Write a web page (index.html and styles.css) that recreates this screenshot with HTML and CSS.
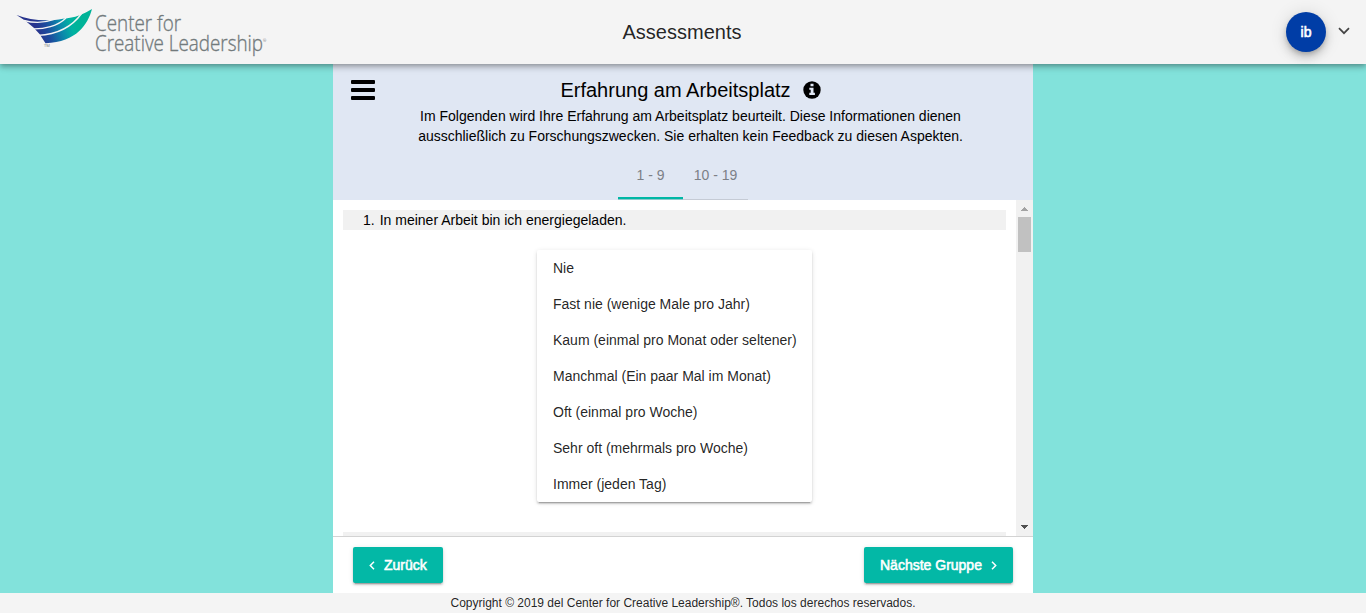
FILE: index.html
```html
<!DOCTYPE html>
<html lang="de">
<head>
<meta charset="utf-8">
<title>Assessments</title>
<link rel="stylesheet" href="styles.css">
</head>
<body>
<header class="topbar">
  <svg class="logo" width="256" height="50" viewBox="14 7 256 50" role="img" aria-label="Center for Creative Leadership">
    <defs>
      <linearGradient id="wing" gradientUnits="userSpaceOnUse" x1="36" y1="27" x2="74" y2="15">
        <stop offset="0" stop-color="#28348d"/>
        <stop offset=".25" stop-color="#1c4a9d"/>
        <stop offset=".6" stop-color="#0a8aab"/>
        <stop offset=".85" stop-color="#00b2a2"/>
        <stop offset="1" stop-color="#00b398"/>
      </linearGradient>
    </defs>
    <path fill="url(#wing)" d="M16.500 15C30 20.500 48 21.500 63 18.700C75 18 84 14 92 9C88 24 77 42 45.500 43.200L39.500 34L33.500 27.500L25 20.500Z"/>
    <path class="feather" d="M24 20.500C35 23.500 46 22.500 55 19.200"/>
    <path class="feather" d="M31 28.800C44 29.500 58 26 66 18"/>
    <path class="feather" d="M38 35.300C58 34.500 72 27 82 13"/>
    <text class="logo-tm" x="44" y="47">TM</text>
    <text class="logo-text" x="95" y="31.300" textLength="86" lengthAdjust="spacingAndGlyphs">Center for</text>
    <text class="logo-text" x="95" y="50.800" textLength="168" lengthAdjust="spacingAndGlyphs">Creative Leadership</text>
    <text class="logo-tm" x="263" y="42">®</text>
  </svg>
  <h1 class="app-title">Assessments</h1>
  <div class="account">
    <span class="avatar">ib</span>
    <svg width="12" height="8" viewBox="0 0 12 8"><path class="account-arrow" d="M1 1.200L6 6.200L11 1.200"/></svg>
  </div>
</header>
<main class="stage">
  <section class="panel">
    <div class="intro">
      <div class="menu"><i></i><i></i><i></i></div>
      <div class="heading">
        <h2>Erfahrung am Arbeitsplatz</h2>
        <svg width="18" height="18" viewBox="0 0 18 18"><circle cx="9" cy="9" r="8.700"/><path class="info-mark" d="M7.500 2.800h3v2.400h-3zM6.300 6.700h4.200v5h1.400v2.200H6.300v-2.200h1.400V8.800H6.300z"/></svg>
      </div>
      <p class="description">Im Folgenden wird Ihre Erfahrung am Arbeitsplatz beurteilt. Diese Informationen dienen<br>ausschließlich zu Forschungszwecken. Sie erhalten kein Feedback zu diesen Aspekten.</p>
      <nav class="tabs"><a class="tab active">1 - 9</a><a class="tab">10 - 19</a></nav>
    </div>
    <div class="scroller">
      <div class="questions">
        <div class="question"><span>1.</span><span>In meiner Arbeit bin ich energiegeladen.</span></div>
        <ul class="options">
          <li>Nie</li>
          <li>Fast nie (wenige Male pro Jahr)</li>
          <li>Kaum (einmal pro Monat oder seltener)</li>
          <li>Manchmal (Ein paar Mal im Monat)</li>
          <li>Oft (einmal pro Woche)</li>
          <li>Sehr oft (mehrmals pro Woche)</li>
          <li>Immer (jeden Tag)</li>
        </ul>
        <div class="question next"></div>
      </div>
      <div class="scrollbar">
        <svg width="17" height="17" viewBox="0 0 17 17" shape-rendering="crispEdges"><path fill="#a3a3a3" d="M8 7h1v1h1v1h1v1h1v1H5v-1h1V9h1V8h1z"/></svg>
        <div class="thumb"></div>
        <svg width="17" height="17" viewBox="0 0 17 17" shape-rendering="crispEdges"><path fill="#505050" d="M5 6h7v1h-1v1h-1v1H9v1H8V9H7V8H6V7H5z"/></svg>
      </div>
    </div>
    <div class="actions">
      <button class="button back"><svg width="6" height="9" viewBox="0 0 6 9"><path class="chevron" d="M5 .8L1.300 4.500L5 8.200"/></svg><span>Zurück</span></button>
      <button class="button forward"><span>Nächste Gruppe</span><svg width="6" height="9" viewBox="0 0 6 9"><path class="chevron" d="M1 .8L4.700 4.500L1 8.200"/></svg></button>
    </div>
  </section>
</main>
<footer class="footer">Copyright © 2019 del Center for Creative Leadership®. Todos los derechos reservados.</footer>
</body>
</html>
```

FILE: styles.css
```css
* { box-sizing: border-box; }
body {
  margin: 0;
  height: 613px;
  display: flex;
  flex-direction: column;
  overflow: hidden;
  font: 14px/20px "Liberation Sans", Arial, sans-serif;
  color: #000;
}
h1, h2, p, ul { margin: 0; padding: 0; font-weight: 400; }
svg { display: block; flex: none; }

.topbar {
  position: relative;
  z-index: 1;
  height: 64px;
  flex: none;
  display: grid;
  grid-template-columns: 1fr auto 1fr;
  align-items: center;
  padding: 0 16px 0 14px;
  background: #f4f4f4;
  box-shadow: 0 2px 4px -1px rgba(0,0,0,.2), 0 4px 5px rgba(0,0,0,.14), 0 1px 10px rgba(0,0,0,.12);
}
.logo { overflow: visible; margin-bottom: 1px; }
.logo-text { font: 300 22px "Open Sans", sans-serif; fill: #727a7c; stroke: #727a7c; stroke-width: .35px; }
.logo-tm { font: 4px "Open Sans", sans-serif; fill: #777; }
.feather { fill: none; stroke: #f4f4f4; stroke-width: 1.3; }
.app-title { font-size: 20px; line-height: 24px; color: rgba(0,0,0,.87); }
.account { justify-self: end; display: flex; align-items: center; gap: 12px; }
.account svg { margin-bottom: 3px; }
.account-arrow { fill: none; stroke: #444; stroke-width: 1.7; }
.avatar {
  width: 40px;
  height: 40px;
  border-radius: 50%;
  background: #003da6;
  color: #fff;
  -webkit-text-stroke: .6px #fff;
  line-height: 40px;
  text-align: center;
  box-shadow: 0 3px 5px -1px rgba(0,0,0,.2), 0 6px 10px rgba(0,0,0,.14), 0 1px 18px rgba(0,0,0,.12);
}

.stage { flex: 1; min-height: 0; display: flex; justify-content: center; background: #82e2db; }
.panel { width: 700px; display: flex; flex-direction: column; background: #fff; }
.intro {
  height: 136px;
  flex: none;
  display: grid;
  grid-template-columns: 72px 1fr 57px;
  grid-template-rows: 42px 40px 54px;
  background: #e0e7f3;
}
.menu { padding: 16px 0 0 18px; display: flex; flex-direction: column; gap: 4px; }
.menu i { width: 24px; height: 4px; border-radius: 1px; background: #000; }
.heading { display: flex; justify-content: center; align-items: center; gap: 12px; padding-top: 10px; }
.heading h2 { font-size: 20px; line-height: 30px; }
.info-mark { fill: #e0e7f3; }
.description { grid-column: 2; text-align: center; white-space: nowrap; }
.tabs { grid-column: 1 / -1; display: flex; justify-content: center; padding-top: 5px; }
.tab { width: 65px; line-height: 48px; height: 49px; text-align: center; color: #7c8087; border-bottom: 1px solid #c5cbd5; }
.tab.active { box-shadow: inset 0 -2px #00b7a5; border-bottom-color: #8fc9cc; }

.scroller { height: 336px; flex: none; display: flex; overflow: hidden; }
.questions { flex: 1; padding: 10px 10px 0; display: flex; flex-direction: column; }
.question { height: 20px; flex: none; display: flex; gap: 5px; padding-left: 20px; background: #f1f1f1; }
.question.next { margin-top: 30px; }
.options {
  width: 275px;
  margin-top: 20px;
  align-self: center;
  list-style: none;
  border-radius: 2px;
  color: rgba(0,0,0,.87);
  box-shadow: 0 3px 1px -2px rgba(0,0,0,.2), 0 2px 2px rgba(0,0,0,.14), 0 1px 5px rgba(0,0,0,.12);
}
.options li { height: 36px; line-height: 36px; padding-left: 16px; white-space: nowrap; }
.scrollbar { width: 17px; display: flex; flex-direction: column; background: #f1f1f1; }
.thumb { width: 13px; height: 35px; margin: 0 2px auto; background: #c1c1c1; }

.actions { flex: 1; display: flex; justify-content: space-between; padding: 10px 20px; border-top: 1px solid #d3d3d3; }
.button {
  height: 36px;
  display: flex;
  align-items: center;
  padding: 0 16px;
  border: 0;
  border-radius: 2px;
  background: #03b8a6;
  color: #fff;
  font: 14px "Liberation Sans", Arial, sans-serif;
  -webkit-text-stroke: .55px #fff;
  white-space: nowrap;
  box-shadow: 0 3px 1px -2px rgba(0,0,0,.2), 0 2px 2px rgba(0,0,0,.14), 0 1px 5px rgba(0,0,0,.12);
}
.back { width: 90px; gap: 9px; }
.forward { width: 149px; justify-content: space-between; }
.chevron { fill: none; stroke: #fff; stroke-width: 1.5; }
.footer { height: 20px; flex: none; background: #f4f4f4; color: rgba(0,0,0,.87); font-size: 12px; line-height: 20px; text-align: center; }
```
